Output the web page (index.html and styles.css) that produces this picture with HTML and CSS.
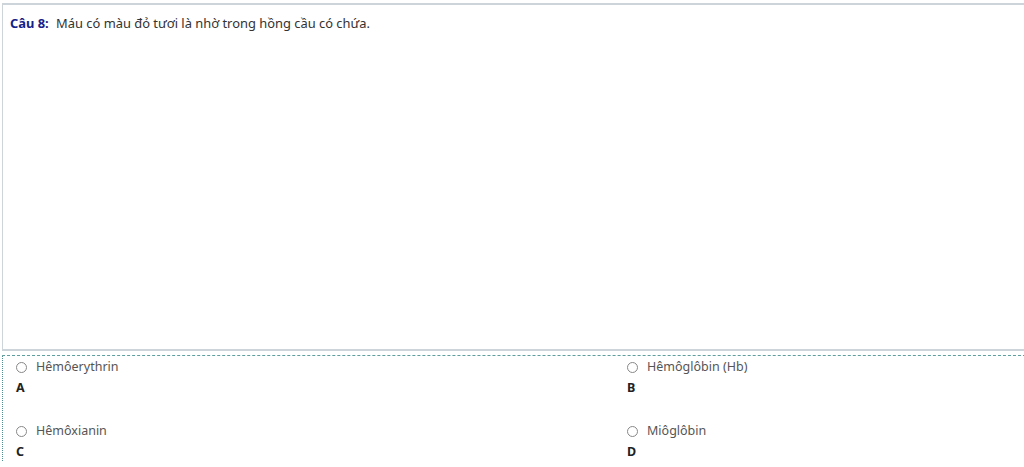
FILE: index.html
```html
<!DOCTYPE html>
<html lang="vi">
<head>
<meta charset="utf-8">
<link rel="stylesheet" href="styles.css">
</head>
<body>
<div class="question">
  <p class="qtext"><span class="qnum">Câu 8:</span> Máu có màu đỏ tươi là nhờ trong hồng cầu có chứa.</p>
</div>
<div class="answers">
  <div class="opt">
    <label class="choice"><span class="radio"></span>Hêmôerythrin</label>
    <div class="letter">A</div>
  </div>
  <div class="opt">
    <label class="choice"><span class="radio"></span>Hêmôglôbin (Hb)</label>
    <div class="letter">B</div>
  </div>
  <div class="opt">
    <label class="choice"><span class="radio"></span>Hêmôxianin</label>
    <div class="letter">C</div>
  </div>
  <div class="opt">
    <label class="choice"><span class="radio"></span>Miôglôbin</label>
    <div class="letter">D</div>
  </div>
</div>
</body>
</html>
```

FILE: styles.css
```css
html, body {
  margin: 0;
  padding: 0;
  background: #fff;
  overflow: hidden;
  width: 1024px;
  height: 467px;
}
body {
  font-family: "Noto Sans", "Open Sans", sans-serif;
  font-size: 12px;
  color: #333;
}
.question {
  margin: 3px 0 0 2px;
  width: 1040px;
  height: 344px;
  border-top: 2px solid #cdd4da;
  border-left: 1px solid #cdd4da;
  border-bottom: 2px solid #cdd4da;
  box-sizing: content-box;
}
.qtext {
  margin: 9px 0 0 7px;
  line-height: 18px;
  font-size: 12.9px;
  color: #333;
}
.qnum {
  color: #14218a;
  font-weight: bold;
  margin-right: 4px;
}
.answers {
  margin: 4px 0 0 2px;
  width: 1040px;
  border-top: 1px dashed #5d9e9e;
  border-left: 1px dotted #4f8f8f;
  display: grid;
  grid-template-columns: 611px 1fr;
  padding: 2px 0 0 13px;
  row-gap: 25px;
}
.opt {
  display: flex;
  flex-direction: column;
}
.choice {
  display: flex;
  align-items: center;
  color: #555;
  font-size: 12.5px;
  line-height: 18px;
}
.radio {
  width: 9px;
  height: 9px;
  border: 1px solid #888;
  border-radius: 50%;
  margin-right: 9px;
}
.letter {
  font-weight: bold;
  color: #222;
  font-size: 12.5px;
  line-height: 18px;
  margin-top: 3px;
}
```
